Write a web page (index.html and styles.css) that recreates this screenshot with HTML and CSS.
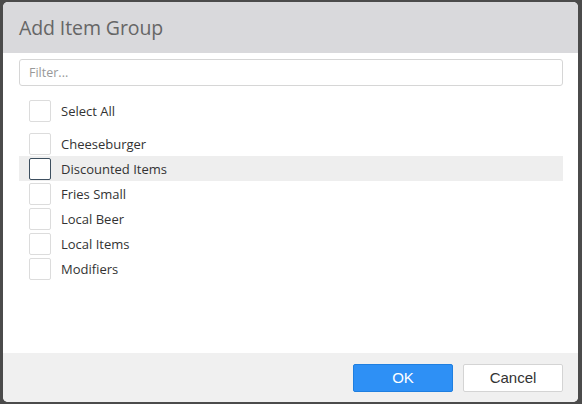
FILE: index.html
```html
<!DOCTYPE html>
<html>
<head>
<meta charset="utf-8">
<link rel="stylesheet" href="styles.css">
</head>
<body>
<div class="dialog">
  <div class="header"><h1 class="title">Add Item Group</h1></div>
  <div class="content">
    <input class="filter" type="text" placeholder="Filter...">
    <div class="row select-all"><span class="box"></span><span class="label">Select All</span></div>
    <div class="list">
      <div class="row"><span class="box"></span><span class="label">Cheeseburger</span></div>
      <div class="row hover"><span class="box focus"></span><span class="label">Discounted Items</span></div>
      <div class="row"><span class="box"></span><span class="label">Fries Small</span></div>
      <div class="row"><span class="box"></span><span class="label">Local Beer</span></div>
      <div class="row"><span class="box"></span><span class="label">Local Items</span></div>
      <div class="row"><span class="box"></span><span class="label">Modifiers</span></div>
    </div>
  </div>
  <div class="footer">
    <button class="btn btn-ok">OK</button>
    <button class="btn btn-cancel">Cancel</button>
  </div>
</div>
</body>
</html>
```
FILE: styles.css
```css
html, body {
  margin: 0;
  padding: 0;
  background: #4b4b4b;
  width: 582px;
  height: 404px;
  overflow: hidden;
}
.dialog {
  margin: 2px 4px 0 3px;
  height: 400px;
  background: #fff;
  border-radius: 5px;
  overflow: hidden;
  display: flex;
  flex-direction: column;
  font-family: "Open Sans", "Noto Sans", sans-serif;
}
.header {
  height: 51px;
  background: #d9d9dc;
  display: flex;
  align-items: center;
  padding-left: 16px;
  flex-shrink: 0;
}
.title {
  margin: 0;
  font-weight: 400;
  font-size: 19.5px;
  color: #666;
  letter-spacing: -0.1px;
}
.content {
  flex: 1;
  padding: 6px 15px 0 16px;
}
.filter {
  display: block;
  box-sizing: border-box;
  width: 100%;
  height: 27px;
  margin: 0;
  border: 1px solid #d6d6d6;
  border-radius: 3px;
  padding: 0 9px;
  font-family: "Open Sans", "Noto Sans", sans-serif;
  font-size: 12.5px;
  color: #333;
  outline: none;
}
.filter::placeholder {
  color: #999;
}
.row {
  height: 25px;
  display: flex;
  align-items: center;
  padding-left: 10px;
}
.select-all {
  margin-top: 12px;
}
.list {
  margin-top: 8px;
}
.row.hover {
  background: #eeeeee;
}
.box {
  box-sizing: border-box;
  width: 22px;
  height: 22px;
  border: 1px solid #dcdcdc;
  border-radius: 2px;
  background: #fff;
  flex-shrink: 0;
}
.box.focus {
  border-color: #3d4f5f;
}
.label {
  margin-left: 10px;
  font-size: 13px;
  color: #333;
}
.footer {
  height: 49px;
  background: #f0f0f0;
  display: flex;
  align-items: center;
  justify-content: flex-end;
  gap: 10px;
  padding-right: 15px;
  flex-shrink: 0;
}
.btn {
  box-sizing: border-box;
  width: 100px;
  height: 28px;
  margin: 0;
  border-radius: 2px;
  font-family: "Liberation Sans", Arial, sans-serif;
  font-size: 15px;
  cursor: pointer;
}
.btn-ok {
  background: #2e90f5;
  border: 1px solid #1f7fe0;
  color: #fff;
}
.btn-cancel {
  background: #fff;
  border: 1px solid #d4d4d4;
  color: #333;
}
```
